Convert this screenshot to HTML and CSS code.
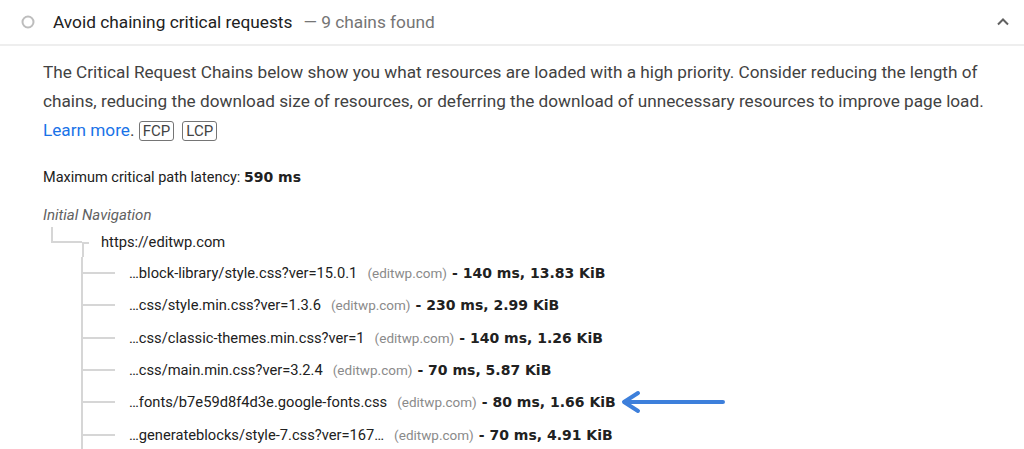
FILE: index.html
```html
<!DOCTYPE html>
<html>
<head>
<meta charset="utf-8">
<link rel="stylesheet" href="styles.css">
</head>
<body>
<div class="audit">
  <div class="header">
    <svg class="status" width="14" height="14" viewBox="0 0 14 14"><circle cx="7" cy="7" r="5.5" fill="none" stroke="#bdbdbd" stroke-width="2"/></svg>
    <span class="title">Avoid chaining critical requests</span>
    <span class="display">— 9 chains found</span>
    <svg class="chevron" width="14" height="10" viewBox="0 0 14 10"><path d="M2 7.5 L7 2.5 L12 7.5" fill="none" stroke="#616161" stroke-width="2"/></svg>
  </div>
  <div class="body">
    <p class="desc">The Critical Request Chains below show you what resources are loaded with a high priority. Consider reducing the length of chains, reducing the download size of resources, or deferring the download of unnecessary resources to improve page load. <a class="link" href="#">Learn more</a>. <span class="badge">FCP</span><span class="badge">LCP</span></p>
    <div class="latency">Maximum critical path latency: <b>590 ms</b></div>
    <div class="nav">Initial Navigation</div>
    <div class="root">
      <span class="elbow"></span><span class="stem"></span>
      <span class="url">https://editwp.com</span>
    </div>
    <div class="children">
      <div class="row"><span class="branch"></span><span class="url">…block-library/style.css?ver=15.0.1</span><span class="host">(editwp.com)</span><span class="data">- 140 ms, 13.83 KiB</span></div>
      <div class="row"><span class="branch"></span><span class="url">…css/style.min.css?ver=1.3.6</span><span class="host">(editwp.com)</span><span class="data">- 230 ms, 2.99 KiB</span></div>
      <div class="row"><span class="branch"></span><span class="url">…css/classic-themes.min.css?ver=1</span><span class="host">(editwp.com)</span><span class="data">- 140 ms, 1.26 KiB</span></div>
      <div class="row"><span class="branch"></span><span class="url">…css/main.min.css?ver=3.2.4</span><span class="host">(editwp.com)</span><span class="data">- 70 ms, 5.87 KiB</span></div>
      <div class="row"><span class="branch"></span><span class="url">…fonts/b7e59d8f4d3e.google-fonts.css</span><span class="host">(editwp.com)</span><span class="data">- 80 ms, 1.66 KiB</span>
        <svg class="arrow" width="106" height="24" viewBox="0 0 106 24"><path d="M4 12 H103 M18 3 L4 12 L18 21" fill="none" stroke="#3d7fdb" stroke-width="4" stroke-linecap="round" stroke-linejoin="round"/></svg>
      </div>
      <div class="row"><span class="branch"></span><span class="url">…generateblocks/style-7.css?ver=167…</span><span class="host">(editwp.com)</span><span class="data">- 70 ms, 4.91 KiB</span></div>
    </div>
  </div>
</div>
</body>
</html>
```
FILE: styles.css
```css
html, body {
  margin: 0;
  padding: 0;
  background: #ffffff;
  overflow: hidden;
}
body {
  font-family: Roboto, "Liberation Sans", sans-serif;
  color: #212121;
}
.header {
  height: 44px;
  display: flex;
  align-items: center;
  padding-left: 21px;
  padding-right: 14px;
  border-bottom: 2px solid #eeeeee;
}
.status {
  flex: none;
  margin-right: 18px;
}
.title {
  font-size: 17.3px;
  color: #212121;
}
.display {
  font-size: 17.3px;
  color: #757575;
  margin-left: 11px;
}
.chevron {
  margin-left: auto;
}
.body {
  padding: 0 34px 0 43px;
}
.desc {
  margin: 11.5px 0 0 0;
  font-size: 17.2px;
  line-height: 29px;
  color: #424242;
}
.link {
  color: #1a73e8;
  text-decoration: none;
}
.badge {
  display: inline-block;
  border: 1px solid #757575;
  border-radius: 3px;
  font-size: 15px;
  line-height: 18px;
  padding: 0 3px;
  color: #444444;
}
.badge + .badge {
  margin-left: 8px;
}
.latency {
  margin-top: 22.5px;
  font-size: 14.5px;
  line-height: 20px;
  color: #212121;
}
.latency b {
  font-family: "DejaVu Sans", sans-serif;
  font-weight: 700;
  font-size: 14px;
}
.nav {
  margin-top: 17px;
  font-size: 15px;
  line-height: 20px;
  font-style: italic;
  color: #616161;
}
.root {
  display: flex;
  height: 30px;
  margin-top: 2px;
  align-items: center;
}
.elbow {
  align-self: flex-start;
  margin-left: 8px;
  width: 29px;
  height: 14px;
  border-left: 2px solid #d6d6d6;
  border-bottom: 2px solid #d6d6d6;
}
.stem {
  align-self: flex-end;
  width: 5px;
  height: 13px;
  border-left: 2px solid #d6d6d6;
  border-top: 2px solid #d6d6d6;
}
.root .url {
  margin-left: 12px;
}
.url {
  font-size: 14.7px;
  color: #212121;
}
.children {
  margin-left: 38px;
  border-left: 2px solid #d6d6d6;
  padding-bottom: 40px;
}
.row {
  display: flex;
  align-items: center;
  height: 32.3px;
}
.branch {
  width: 32px;
  height: 2px;
  background: #d6d6d6;
  margin-right: 14px;
}
.host {
  font-size: 13.5px;
  color: #8a8a8a;
  margin-left: 10px;
}
.data {
  font-family: "DejaVu Sans", sans-serif;
  font-weight: 700;
  font-size: 14px;
  margin-left: 5px;
  color: #212121;
}
.arrow {
  margin-left: 4px;
}
```
